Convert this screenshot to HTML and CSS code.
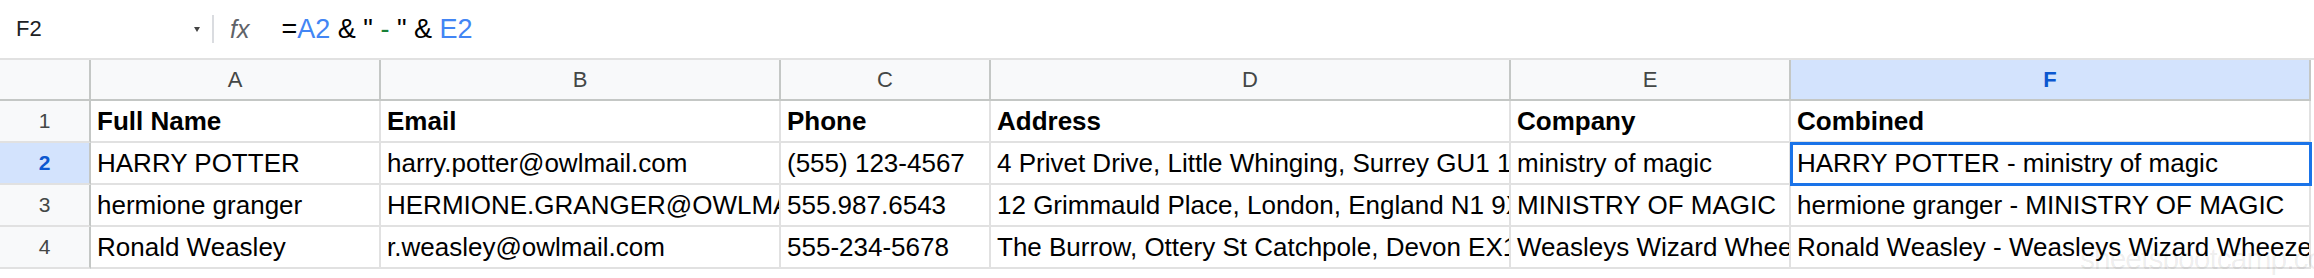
FILE: index.html
```html
<!doctype html>
<html lang="en">
  <head>
    <meta charset="UTF-8" />
    <title>Sheet - Combined</title>
    <link rel="stylesheet" href="styles.css">
  </head>
  <body>
    <div class="app">
      <div class="formula-bar">
        <div class="name-box">
          <span>F2</span>
          <span class="caret"></span>
        </div>
        <div class="divider"></div>
        <div class="fx">fx</div>
        <div class="formula">=<span class="ref">A2</span> &amp; " <span class="str">-</span> " &amp; <span class="ref">E2</span></div>
      </div>

      <div class="sheet">
        <div class="corner"></div>
        <div class="col-head">A</div>
        <div class="col-head">B</div>
        <div class="col-head">C</div>
        <div class="col-head">D</div>
        <div class="col-head">E</div>
        <div class="col-head selected">F</div>

        <div class="row-head">1</div>
        <div class="cell bold">Full Name</div>
        <div class="cell bold">Email</div>
        <div class="cell bold">Phone</div>
        <div class="cell bold">Address</div>
        <div class="cell bold">Company</div>
        <div class="cell bold">Combined</div>

        <div class="row-head selected">2</div>
        <div class="cell">HARRY POTTER</div>
        <div class="cell">harry.potter@owlmail.com</div>
        <div class="cell">(555) 123-4567</div>
        <div class="cell">4 Privet Drive, Little Whinging, Surrey GU1 1AB</div>
        <div class="cell">ministry of magic</div>
        <div class="cell active">HARRY POTTER - ministry of magic</div>

        <div class="row-head">3</div>
        <div class="cell">hermione granger</div>
        <div class="cell">HERMIONE.GRANGER@OWLMAIL.COM</div>
        <div class="cell">555.987.6543</div>
        <div class="cell">12 Grimmauld Place, London, England N1 9XY</div>
        <div class="cell">MINISTRY OF MAGIC</div>
        <div class="cell">hermione granger - MINISTRY OF MAGIC</div>

        <div class="row-head">4</div>
        <div class="cell">Ronald Weasley</div>
        <div class="cell">r.weasley@owlmail.com</div>
        <div class="cell">555-234-5678</div>
        <div class="cell">The Burrow, Ottery St Catchpole, Devon EX1 2AB</div>
        <div class="cell">Weasleys Wizard Wheezes</div>
        <div class="cell">Ronald Weasley - Weasleys Wizard Wheezes</div>
      </div>

      <div class="watermark">sheetsbootcamp.com</div>
    </div>
  </body>
</html>
```

FILE: styles.css
```css
body {
  margin: 0;
  background: white;
  font-family: "Liberation Sans", Arial, sans-serif;
  color: #000;
}
.app {
  position: relative;
  width: 2314px;
  height: 278px;
  overflow: hidden;
}
.formula-bar {
  display: flex;
  align-items: center;
  height: 58px;
  border-bottom: 2px solid #e1e1e1;
}
.name-box {
  display: flex;
  align-items: center;
  justify-content: space-between;
  box-sizing: border-box;
  width: 212px;
  padding: 0 12px 0 16px;
  font-size: 22px;
  color: #202124;
}
.caret {
  width: 0;
  height: 0;
  border-left: 3px solid transparent;
  border-right: 3px solid transparent;
  border-top: 5px solid #444;
}
.divider {
  width: 2px;
  height: 28px;
  background: #dadce0;
}
.fx {
  margin-left: 16px;
  font-size: 25px;
  font-style: italic;
  color: #5f6368;
}
.formula {
  margin-left: 32px;
  font-size: 27px;
  white-space: pre;
}
.formula .ref {
  color: #4285f4;
}
.formula .str {
  color: #188038;
}
.sheet {
  display: grid;
  grid-template-columns: 91px 290px 400px 210px 520px 280px 520px;
  grid-template-rows: 41px repeat(4, 42px);
}
.corner,
.col-head,
.row-head {
  box-sizing: border-box;
  background: #f8f9fa;
  border-right: 2px solid #c4c7c5;
  border-bottom: 2px solid #c4c7c5;
  color: #444746;
  display: flex;
  align-items: center;
  justify-content: center;
}
.col-head {
  font-size: 22px;
}
.row-head {
  font-size: 21px;
  border-bottom-color: #e1e1e1;
}
.selected {
  background: #d3e3fd;
  color: #0b57d0;
  font-weight: bold;
}
.cell {
  box-sizing: border-box;
  display: flex;
  align-items: flex-end;
  padding: 0 6px 4px 6px;
  border-right: 2px solid #e1e1e1;
  border-bottom: 2px solid #e1e1e1;
  font-size: 26px;
  white-space: nowrap;
  overflow: hidden;
}
.bold {
  font-weight: bold;
}
.active {
  position: relative;
  z-index: 1;
  outline: 3px solid #1a73e8;
  outline-offset: -2px;
}
.watermark {
  position: absolute;
  left: 2080px;
  top: 242px;
  font-size: 30px;
  letter-spacing: -1px;
  color: rgba(0, 0, 0, 0.08);
  pointer-events: none;
}
```
